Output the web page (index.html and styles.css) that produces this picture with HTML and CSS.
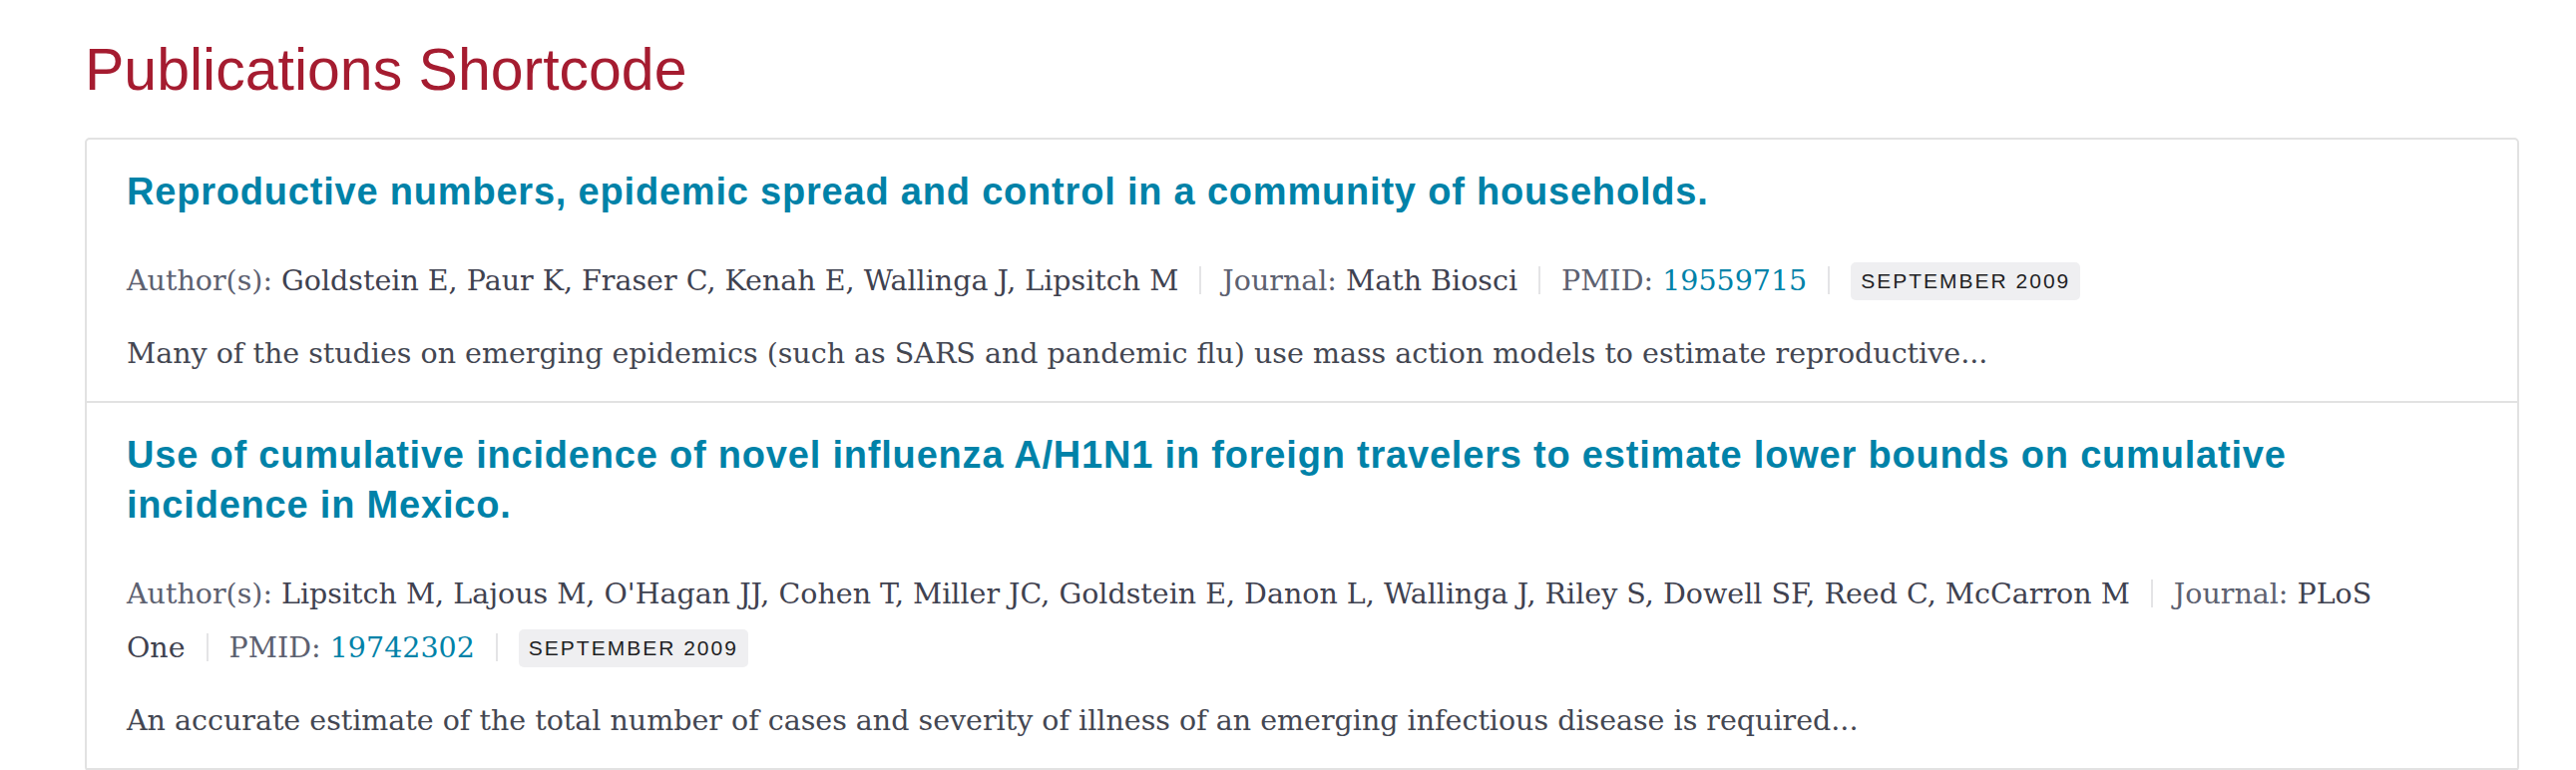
FILE: index.html
```html
<!DOCTYPE html>
<html lang="en">
<head>
<meta charset="utf-8">
<title>Publications Shortcode</title>
<link rel="stylesheet" href="styles.css">
</head>
<body>
<main class="page">
  <h1 class="page-title">Publications Shortcode</h1>
  <section class="pub-list">
    <article class="pub">
      <h2 class="pub-title"><a href="#">Reproductive numbers, epidemic spread and control in a community of households.</a></h2>
      <p class="pub-meta"><span class="meta-label">Author(s):</span> Goldstein E, Paur K, Fraser C, Kenah E, Wallinga J, Lipsitch M<span class="sep"></span><span class="meta-label">Journal:</span> Math Biosci<span class="sep"></span><span class="meta-label">PMID:</span> <a class="pmid" href="#">19559715</a><span class="sep"></span><span class="badge">September 2009</span></p>
      <p class="pub-abstract">Many of the studies on emerging epidemics (such as SARS and pandemic flu) use mass action models to estimate reproductive...</p>
    </article>
    <article class="pub">
      <h2 class="pub-title"><a href="#">Use of cumulative incidence of novel influenza A/H1N1 in foreign travelers to estimate lower bounds on cumulative incidence in Mexico.</a></h2>
      <p class="pub-meta"><span class="meta-label">Author(s):</span> Lipsitch M, Lajous M, O'Hagan JJ, Cohen T, Miller JC, Goldstein E, Danon L, Wallinga J, Riley S, Dowell SF, Reed C, McCarron M<span class="sep"></span><span class="meta-label">Journal:</span> PLoS One<span class="sep"></span><span class="meta-label">PMID:</span> <a class="pmid" href="#">19742302</a><span class="sep"></span><span class="badge">September 2009</span></p>
      <p class="pub-abstract">An accurate estimate of the total number of cases and severity of illness of an emerging infectious disease is required...</p>
    </article>
  </section>
</main>
</body>
</html>
```

FILE: styles.css
```css
* { box-sizing: border-box; }
html, body { margin: 0; padding: 0; background: #ffffff; }
.page {
  padding: 36px 57px 0 85px;
}
.page-title {
  margin: 0 0 34px 0;
  font-family: "Liberation Sans", Arial, sans-serif;
  font-weight: 400;
  font-size: 59px;
  line-height: 68px;
  color: #a51c30;
}
.pub-list {
  border: 2px solid #e2e2e2;
  border-radius: 5px;
}
.pub {
  padding: 27px 100px 20px 40px;
  border-bottom: 2px solid #e2e2e2;
}
.pub-title {
  margin: 0;
  font-family: "Liberation Sans", Arial, sans-serif;
  font-weight: 700;
  font-size: 38px;
  letter-spacing: 0.8px;
  line-height: 50px;
}
.pub-title a {
  color: #0082a8;
  text-decoration: none;
}
.pub-meta {
  margin: 38px 0 0 0;
  font-family: "DejaVu Serif", "Liberation Serif", serif;
  font-size: 28.5px;
  line-height: 54px;
  color: #3f4250;
}
.meta-label { color: #5d6170; }
.pmid { color: #0082a8; text-decoration: none; }
.sep {
  display: inline-block;
  width: 2px;
  height: 28px;
  margin: 0 21px;
  background: #e4e4e6;
  vertical-align: -4px;
}
.badge {
  display: inline-block;
  padding: 0 10px;
  height: 38px;
  line-height: 38px;
  border-radius: 5px;
  background: #efeff1;
  color: #1f1f24;
  font-family: "Liberation Sans", Arial, sans-serif;
  font-size: 21px;
  letter-spacing: 2px;
  text-transform: uppercase;
  vertical-align: 2px;
}
.pub-abstract {
  margin: 19px 0 0 0;
  font-family: "DejaVu Serif", "Liberation Serif", serif;
  font-size: 28.5px;
  line-height: 54px;
  color: #444752;
}
```
